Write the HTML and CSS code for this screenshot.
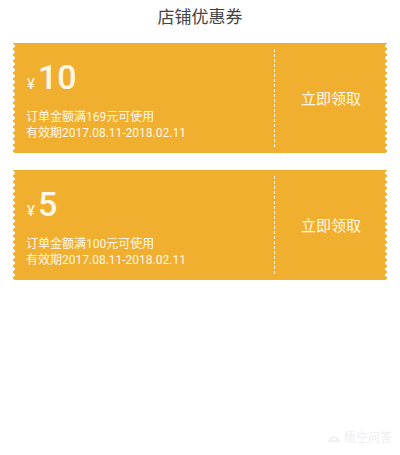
FILE: index.html
```html
<!DOCTYPE html>
<html>
<head>
    <meta charset="utf-8">
    <title>店铺优惠券</title>
    <link rel="stylesheet" href="styles.css">
</head>
<body>
    <div class="page">
        <h1 class="title">店铺优惠券</h1>

        <div class="coupon-list">
            <div class="coupon">
                <div class="coupon-info">
                    <div class="amount"><span class="yen">¥</span><span class="num">10</span></div>
                    <p class="rule">订单金额满169元可使用</p>
                    <p class="rule">有效期2017.08.11-2018.02.11</p>
                </div>
                <div class="coupon-action">立即领取</div>
            </div>

            <div class="coupon">
                <div class="coupon-info">
                    <div class="amount"><span class="yen">¥</span><span class="num">5</span></div>
                    <p class="rule">订单金额满100元可使用</p>
                    <p class="rule">有效期2017.08.11-2018.02.11</p>
                </div>
                <div class="coupon-action">立即领取</div>
            </div>
        </div>
    </div>

    <div class="watermark">
        <svg width="14" height="12" viewBox="0 0 14 12">
            <path d="M2 10 Q7 2 12 10 Z" fill="none" stroke="#eeeeee" stroke-width="1.6"/>
            <circle cx="5" cy="7" r="1" fill="#eeeeee"/>
            <circle cx="9" cy="7" r="1" fill="#eeeeee"/>
        </svg>
        <span>悟空问答</span>
    </div>
</body>
</html>
```

FILE: styles.css
```css
body {
    margin: 0;
    background: #fff;
    font-family: Roboto, "Noto Sans CJK SC", sans-serif;
    height: 455px;
    position: relative;
    overflow: hidden;
}

.title {
    margin: 0;
    height: 35px;
    line-height: 35px;
    text-align: center;
    font-size: 17px;
    font-weight: normal;
    color: #444;
}

.coupon-list {
    padding: 8px 13px 0 13px;
    display: flex;
    flex-direction: column;
    gap: 17px;
}

.coupon {
    height: 110px;
    display: flex;
    color: #fff8ea;
    /* little notches down both sides */
    background:
        radial-gradient(circle at 0 50%, #fff 1.6px, transparent 2.2px) left top / 4px 6px repeat-y,
        radial-gradient(circle at 100% 50%, #fff 1.6px, transparent 2.2px) right top / 4px 6px repeat-y,
        #f0af2f;
}

.coupon-info {
    width: 262px;
    padding: 8px 0 0 13px;
    box-sizing: border-box;
    border-right: 1px dashed rgba(255, 255, 255, 0.85);
    margin: 6px 0;
}

.amount {
    height: 40px;
    display: flex;
    align-items: baseline;
}

.yen {
    font-size: 15px;
    margin-right: 3px;
    margin-left: 1px;
}

.num {
    font-size: 34px;
    font-weight: 500;
    line-height: 40px;
}

.rule {
    margin: 0;
    font-size: 12px;
    line-height: 16px;
}

.amount + .rule {
    margin-top: 12px;
}

.coupon-action {
    flex: 1;
    display: flex;
    align-items: center;
    justify-content: center;
    font-size: 15px;
    padding-bottom: 2px;
}

.watermark {
    position: absolute;
    right: 8px;
    bottom: 10px;
    display: flex;
    align-items: center;
    gap: 3px;
    color: #eeeeee;
    font-size: 12px;
}
```
